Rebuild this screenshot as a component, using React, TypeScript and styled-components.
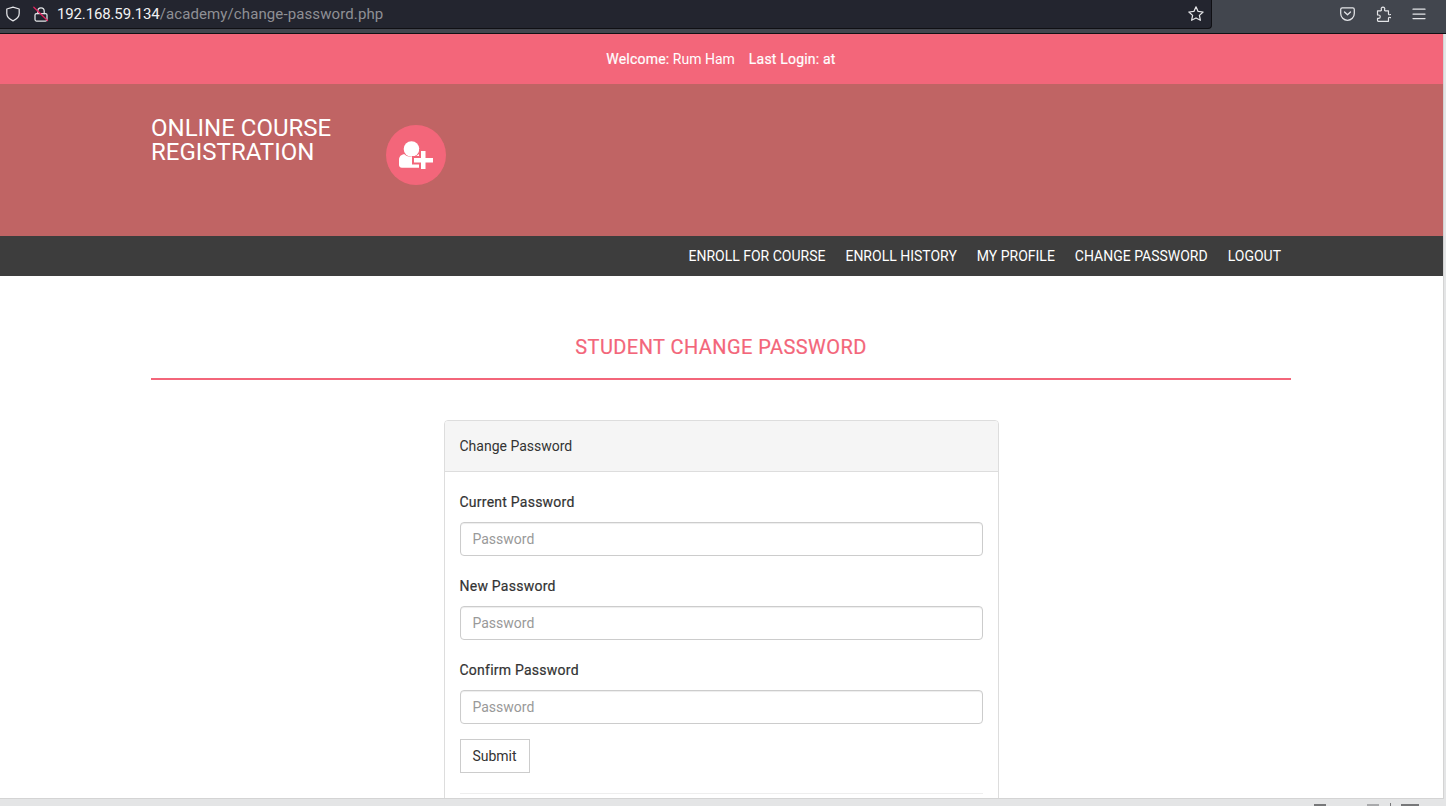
import React from "react";
import styled, { createGlobalStyle } from "styled-components";

const Global = createGlobalStyle`
  html, body { margin: 0; padding: 0; height: 100%; overflow: hidden; background: #fff; }
  * { box-sizing: border-box; }
  body { font-family: Roboto, "Liberation Sans", sans-serif; font-size: 14px; color: #333; }
`;

const Shell = styled.div`
  width: 1446px; height: 806px; display: flex; flex-direction: column; overflow: hidden; background: #e4e5e6;
`;
const Chrome = styled.div`
  height: 34px; flex: none; display: flex; background: #42464e; border-bottom: 1px solid #101014;
`;
const UrlBar = styled.div`
  width: 1212px; height: 29px; flex: none; background: #23252f; border: 1px solid #101014; border-width: 0 1px 1px 0;
  border-bottom-right-radius: 4px; display: flex; align-items: center; padding: 0 7px 0 5px;
`;
const Url = styled.div`
  margin-left: 8px; font-size: 15px; color: #f2f2f4; flex: 1; letter-spacing: -0.14px; font-family: Roboto, sans-serif;
  span { color: #8f9095; letter-spacing: 0.11px; }
`;
const ChromeIcons = styled.div`
  flex: 1; display: flex; align-items: center; height: 28px; padding-left: 128px;
`;
const Glyph = styled.svg<{ $left?: number }>`
  display: block; flex: none; fill: none; stroke: #e4e5e8; stroke-width: 1.25; stroke-linejoin: round; stroke-linecap: round;
  margin-left: ${(p) => p.$left ?? 0}px;
`;
const Viewport = styled.div`
  flex: 1; min-height: 0; display: flex; flex-direction: column; width: 1444px; background: #fff; overflow: hidden;
  border-right: 1px solid #d4d4d4; border-bottom: 1px solid #d4d4d4;
`;
const Status = styled.div`
  height: 7px; flex: none; display: flex; align-items: flex-end; padding-left: 1314px;
`;
const StatusBit = styled.i<{ $w: number; $gap: number; $h?: number; $tone?: string }>`
  display: block; width: ${(p) => p.$w}px; height: ${(p) => p.$h ?? 2}px; margin-right: ${(p) => p.$gap}px; background: ${(p) => p.$tone ?? "#77787a"};
`;
const WelcomeBar = styled.div`
  height: 50px; flex: none; background: #f3667a; color: #fff; display: flex; justify-content: center; align-items: center;
  gap: 14px; font-weight: 400; padding-right: 1px;
  b { font-weight: 400; -webkit-text-stroke: 0.2px #fff; letter-spacing: 0.2px; }
`;
const Brand = styled.div`
  height: 152px; flex: none; background: #c06464; padding: 32px 0 0 151px; display: flex; align-items: flex-start;
`;
const Title = styled.h1`
  margin: 0; width: 235px; font-size: 24px; line-height: 24px; font-weight: 400; color: #fff;
`;
const Badge = styled.div`
  margin-top: 9px; width: 60px; height: 60px; border-radius: 50%; background: #f3667a; display: flex; align-items: center; justify-content: center;
`;
const UserIcon = styled.svg`
  display: block; margin: -1px 0 0 -1px;
`;
const Nav = styled.nav`
  height: 40px; flex: none; background: #3d3d3d; display: flex; justify-content: flex-end; align-items: center; gap: 20px; padding-right: 162px;
`;
const NavLink = styled.a`
  color: #fff; font-size: 14px; line-height: 20px;
`;
const Container = styled.main`
  width: 1140px; margin-left: 151px; flex: 1; min-height: 0;
`;
const PageTitle = styled.h2`
  margin: 57px 0 0; height: 47px; border-bottom: 2px solid #f3667a; text-align: center; font-size: 20px; line-height: 28px; font-weight: 400; color: #f3667a;
  letter-spacing: 0.44px; -webkit-text-stroke: 0.2px #f3667a;
`;
const Panel = styled.section`
  width: 555px; margin: 40px 0 0 293px; border: 1px solid #ddd; border-radius: 4px; background: #fff;
`;
const PanelHead = styled.div`
  height: 51px; background: #f5f5f5; border-bottom: 1px solid #ddd; border-radius: 3px 3px 0 0; padding: 0 14.500px; display: flex; align-items: center; color: #333;
`;
const PanelBody = styled.div`
  padding: 20px 15px 40px 14.500px;
`;
const Group = styled.div`
  margin-bottom: 20px;
  &:last-of-type { margin-bottom: 15px; }
`;
const Label = styled.label`
  display: block; font-weight: 400; font-size: 14px; line-height: 20px; margin-bottom: 10px; color: #333;
  letter-spacing: 0.24px; -webkit-text-stroke: 0.2px #333;
`;
const Input = styled.input`
  display: block; width: 100%; height: 34px; border: 1px solid #ccc; border-radius: 4px; padding: 6px 12px; font: 14px/20px Roboto, sans-serif;
  box-shadow: inset 0 1px 1px rgba(0,0,0,.075); color: #555;
  &::placeholder { color: #999; opacity: 1; }
`;
const Submit = styled.button`
  display: block; height: 34px; width: 70px; background: #fff; border: 1px solid #ccc; color: #333; font: 14px/20px Roboto, sans-serif; padding: 0;
`;
const Rule = styled.hr`
  margin: 20px 0 0; border: 0; border-top: 1px solid #eee;
`;

const fields = ["Current Password", "New Password", "Confirm Password"];
const links = ["ENROLL FOR COURSE", "ENROLL HISTORY", "MY PROFILE", "CHANGE PASSWORD", "LOGOUT"];

export default function App() {
  return (
    <Shell>
      <Global />
      <Chrome>
        <UrlBar>
          <Glyph width="16" height="16" viewBox="0 0 16 16"><path d="M8 1.2 1.800 3v4.600c0 3.200 2.600 5.700 6.200 7.200 3.600-1.500 6.200-4 6.200-7.200V3z" /></Glyph>
          <Glyph $left={12} width="16" height="16" viewBox="0 0 16 16">
            <rect x="2" y="7.500" width="12" height="7.500" rx="1.500" />
            <path d="M4.800 7.500V5a3.200 3.200 0 0 1 6.400 0v2.500" />
            <path d="M.8 1.200 14.500 14.500" stroke="#e0245e" />
          </Glyph>
          <Url>192.168.59.134<span>/academy/change-password.php</span></Url>
          <Glyph width="16" height="16" viewBox="0 0 16 16"><path d="m8 .8 2.100 4.600 5 .6-3.700 3.400 1 4.900L8 12l-4.400 2.300 1-4.900L.9 6l5-.6z" /></Glyph>
        </UrlBar>
        <ChromeIcons>
          <Glyph width="15" height="14" viewBox="0 0 15 14"><path d="M.7 2.500C.7 1.500 1.300.8 2.300.8h10.400c1 0 1.600.7 1.600 1.700v4a6.800 6.800 0 0 1-13.600 0z" /><path d="m4.500 5 3 2.800L10.500 5" /></Glyph>
          <Glyph $left={21} width="15" height="17" viewBox="0 0 16 17"><path d="M1.600 4.600h3.300a1 1 0 0 0 .8-1.400 1.900 1.900 0 1 1 3.500 0 1 1 0 0 0 .8 1.400h3.300v3.300c0 .9 1 1 1.400.8a1.700 1.700 0 1 1 0 3c-.5-.2-1.400 0-1.400.8v3.300H2.900a1.200 1.200 0 0 1-1.300-1.300v-1.800h1.100a1.800 1.800 0 0 0 0-3.700H1.600z" /></Glyph>
          <Glyph $left={21} width="14" height="14" viewBox="0 0 14 14"><path d="M1 2.200h12M1 7h12M1 11.600h12" /></Glyph>
        </ChromeIcons>
      </Chrome>
      <Viewport>
        <WelcomeBar>
          <div><b>Welcome:</b> Rum Ham</div>
          <div><b>Last Login: at</b></div>
        </WelcomeBar>
        <Brand>
          <Title>ONLINE COURSE REGISTRATION</Title>
          <Badge>
            <UserIcon width="36" height="28" viewBox="0 0 36 28">
              <circle cx="13.500" cy="8" r="7.800" fill="#fff" />
              <path d="M1 24v-5c0-3.600 2.200-5.800 5.500-5.800 1.800 1.700 4.200 2.700 7 2.700s5.200-1 7-2.700c3.300 0 5.500 2.200 5.500 5.800v5c0 1.600-1.200 2.800-2.800 2.800H3.800C2.200 26.800 1 25.600 1 24z" fill="#fff" />
              <path d="M21 8h8.500v7H36v8.500h-6.500V28H21v-4.500h-7V15h7z" fill="#f3667a" />
              <path d="M23 10h4.500v7H35v4.500h-7.500V28H23v-6.500h-7V17h7z" fill="#fff" />
            </UserIcon>
          </Badge>
        </Brand>
        <Nav>
          {links.map((l) => <NavLink key={l}>{l}</NavLink>)}
        </Nav>
        <Container>
          <PageTitle>STUDENT CHANGE PASSWORD</PageTitle>
          <Panel>
            <PanelHead>Change Password</PanelHead>
            <PanelBody>
              {fields.map((f) => (
                <Group key={f}>
                  <Label>{f}</Label>
                  <Input type="password" placeholder="Password" />
                </Group>
              ))}
              <Submit type="button">Submit</Submit>
              <Rule />
            </PanelBody>
          </Panel>
        </Container>
      </Viewport>
      <Status>
        <StatusBit $w={12} $gap={41} />
        <StatusBit $w={12} $gap={11} $tone="#a9aaac" />
        <StatusBit $w={1} $gap={10} $h={3} $tone="#77787a" />
        <StatusBit $w={18} $gap={0} />
      </Status>
    </Shell>
  );
}
